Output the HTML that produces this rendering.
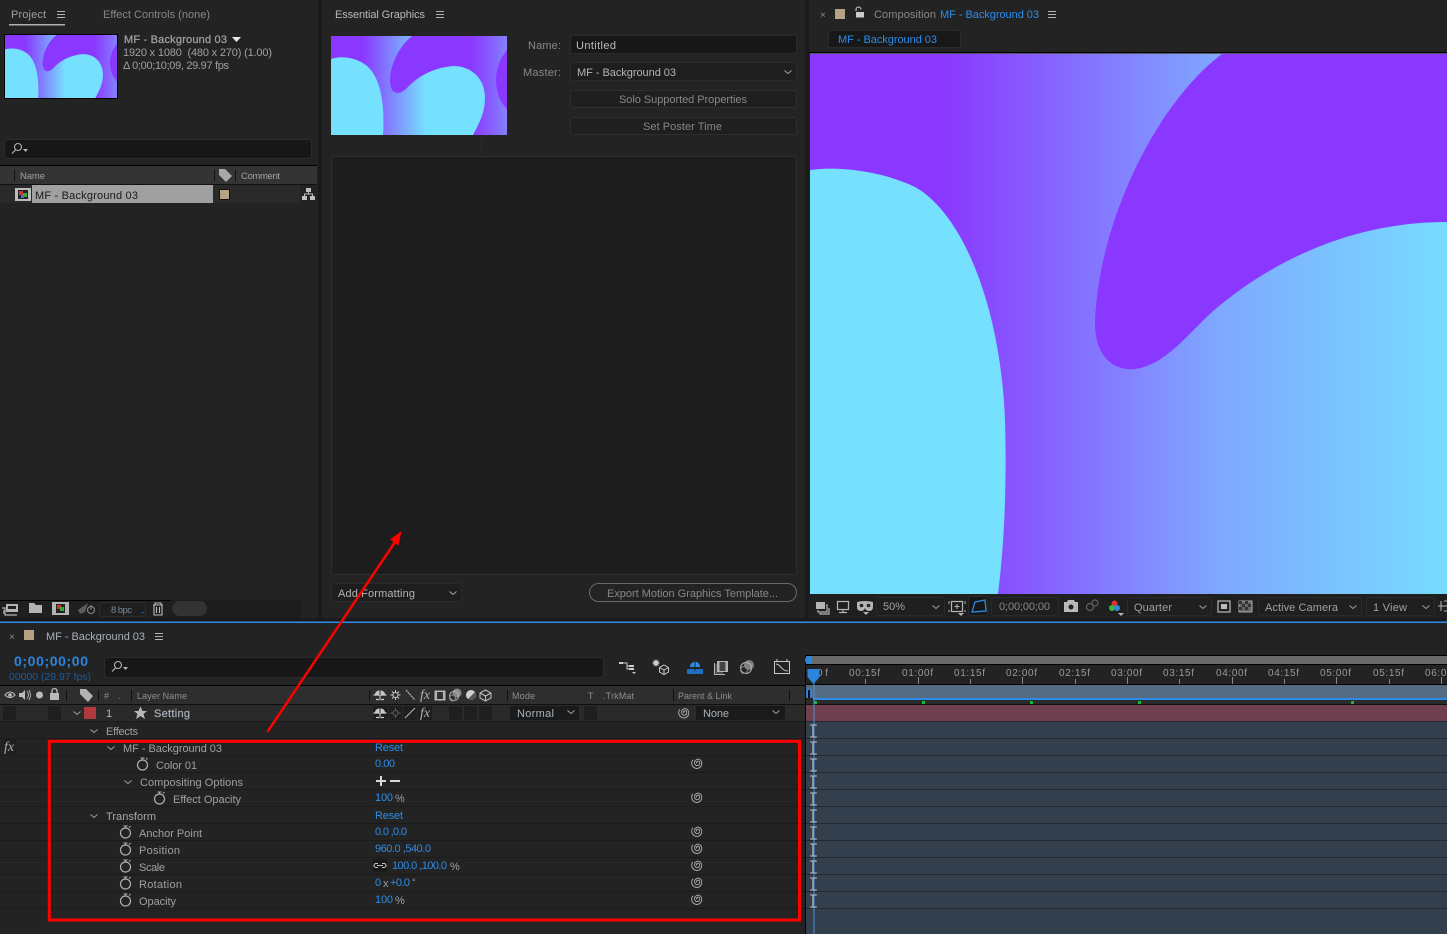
<!DOCTYPE html>
<html><head><meta charset="utf-8"><title>After Effects</title>
<style>
html,body{margin:0;padding:0;background:#1a1a1a;width:1447px;height:934px;overflow:hidden}
svg{display:block}
text{font-family:"Liberation Sans",sans-serif;font-size:11px;fill:#a0a0a0;white-space:pre}
.b{fill:#2d8ceb}.h{font-size:9.5px;fill:#8e8e8e}.d{fill:#878787}.l{fill:#c4c4c4}
.r{font-size:10px;fill:#9a9a9a}
.ic{fill:none;stroke:#b4b4b4;stroke-width:1.2}
.if{fill:#b4b4b4}
</style></head><body>
<svg width="1447" height="934" viewBox="0 0 1447 934" xmlns="http://www.w3.org/2000/svg">
<defs>
<linearGradient id="v" gradientUnits="userSpaceOnUse" x1="810" x2="1447" y1="0" y2="0">
<stop offset="0" stop-color="#8a38ff"/><stop offset=".21" stop-color="#8a38ff"/><stop offset=".64" stop-color="#7fa8ff"/><stop offset="1" stop-color="#76dcff"/></linearGradient>
<linearGradient id="t"><stop offset="0" stop-color="#8a38ff"/><stop offset=".18" stop-color="#8a38ff"/><stop offset=".54" stop-color="#75e1ff"/><stop offset="1" stop-color="#75e1ff"/></linearGradient>
<linearGradient id="t2" gradientUnits="userSpaceOnUse" x1="0" x2="176" y1="0" y2="0"><stop offset="0" stop-color="#8a38ff"/><stop offset=".8" stop-color="#8a38ff"/><stop offset="1" stop-color="#8580ff"/></linearGradient>
<g id="thumb">
<rect width="176" height="99" fill="url(#t)"/>
<path d="M81 0C68 10 59 30 59 44C59 58 67 60 75 53C85 42 100 32 122 30C142 30 154 44 154 62C154 76 148 88 142 99L176 99L176 0Z" fill="url(#t2)"/>
<path d="M176 14C168 24 165 34 165 44C165 56 169 66 176 73Z" fill="#8a38ff"/>
<path d="M0 23C8 20 24 20 36 30C50 42 54 70 52 99L0 99Z" fill="#75e1ff"/>
</g>
<g id="sw"><circle cx="0" cy="1" r="5" fill="none" stroke="#b0b0b0" stroke-width="1.2"/><path d="M-2 -6H2M0 -6V-4M3.5 -4.5L5 -6" stroke="#b0b0b0" stroke-width="1.1" fill="none"/></g>
<g id="sp"><path d="M0 .5A1.5 1.5 0 0 1 3 .5A2.500 2.500 0 0 1 -2 .5A3.500 3.500 0 0 1 5 .5A5 5 0 0 1 -5 .5A5.500 5.500 0 0 1 -1.500 -4.500" fill="none" stroke="#a8a8a8" stroke-width="1" transform="rotate(-30)"/></g>
<g id="ib"><path d="M-3.3 -6H3.3M-.6 -6V6M-3.3 6H3.3" fill="none" stroke="#a9b2ba" stroke-width="1.2"/></g>
<g id="chev"><path d="M-3.5 -1.5L0 1.5L3.5 -1.5" fill="none" stroke="#a0a0a0" stroke-width="1"/></g>
<g id="menu"><path d="M0 .5H8M0 3.5H8M0 6.5H8" stroke="#b4b4b4" stroke-width="1" fill="none"/></g>
<g id="mp"><path d="M-5 -.5C-5 -6 5 -6 5 -.5Z" fill="#c8c8c8"/><path d="M-6.500 0H6.500M-4 4.500H4" fill="none" stroke="#d0d0d0" stroke-width="1.200"/><path d="M0 -5V5" stroke="#2a2a2a" stroke-width="1"/><path d="M0 0V4" stroke="#d0d0d0" stroke-width="1"/></g>
</defs>

<rect width="1447" height="934" fill="#1a1a1a"/>
<!-- panels -->
<rect x="0" y="0" width="318" height="618" fill="#232323"/>
<rect x="322" y="0" width="483" height="618" fill="#232323"/>
<rect x="809" y="0" width="638" height="618" fill="#232323"/>
<rect x="0" y="622" width="1447" height="312" fill="#232323"/>
<rect x="0" y="621.500" width="1447" height="1.500" fill="#2d8ceb"/>

<!-- PROJECT -->
<text x="11" y="18" textLength="35">Project</text>
<use href="#menu" x="57" y="11"/>
<rect x="9" y="24" width="56" height="1.500" fill="#b0b0b0"/>
<text x="103" y="18" textLength="107" class="d">Effect Controls (none)</text>
<rect x="4" y="34" width="114" height="65" fill="#000"/>
<svg x="5" y="35" width="112" height="63" viewBox="0 0 176 99" preserveAspectRatio="none"><use href="#thumb"/></svg>
<text x="124" y="43" textLength="103" style="stroke:#a3a3a3;stroke-width:.25">MF - Background 03</text>
<path d="M232 37H241L236.500 42Z" fill="#e8e8e8"/>
<text x="123" y="56" textLength="149">1920 x 1080  (480 x 270) (1.00)</text>
<text x="123" y="69" textLength="106">Δ 0;00;10;09, 29.97 fps</text>
<rect x="4.500" y="139.500" width="307" height="19" rx="3" fill="#171717" stroke="#2c2c2c"/>
<circle cx="18" cy="147" r="3.500" fill="none" stroke="#b4b4b4" stroke-width="1.100"/><path d="M15.500 150L12 153.500" stroke="#b4b4b4" stroke-width="1.200"/><path d="M23 149H28L25.500 152Z" fill="#b4b4b4"/>
<rect x="0" y="165" width="317" height="1" fill="#000"/>
<rect x="0" y="166" width="317" height="18" fill="#343434"/>
<rect x="0" y="184" width="317" height="1" fill="#111"/>
<rect x="14" y="170" width="1" height="11" fill="#111"/><rect x="214" y="170" width="1" height="11" fill="#111"/><rect x="235" y="170" width="1" height="11" fill="#111"/>
<text x="20" y="179" textLength="25" class="h" style="fill:#a0a0a0">Name</text>
<path d="M219 169H225L232 176L226 182L219 175Z" fill="#a8a8a8"/>
<text x="241" y="179" textLength="39" class="h" style="fill:#a0a0a0">Comment</text>
<rect x="0" y="185" width="300" height="18" fill="#2a2a2a"/>
<rect x="32" y="185" width="181" height="18" fill="#a0a0a0"/>
<rect x="15" y="188" width="16" height="13" fill="#bbb"/><rect x="18" y="190" width="10" height="9" fill="#222"/><rect x="19" y="191" width="4" height="4" fill="#c33"/><rect x="23" y="193" width="4" height="4" fill="#3a3"/><rect x="21" y="195" width="3" height="3" fill="#47c"/>
<text x="35" y="199" textLength="103" style="fill:#1a1a1a">MF - Background 03</text>
<rect x="219.500" y="189.500" width="10" height="10" fill="#b5a283" stroke="#111"/>
<path d="M306 188H311V192H306ZM302 196H307V200H302ZM310 196H315V200H310Z" fill="#c0c0c0"/><path d="M308.500 192V194M304.500 196V194H312.500V196" fill="none" stroke="#c0c0c0"/>
<!-- project footer -->
<rect x="0" y="600" width="171" height="1" fill="#000"/>
<rect x="0" y="601" width="301" height="17" fill="#1f1f1f"/><rect x="171" y="600" width="130" height="18" fill="#1d1d1d"/>
<g class="ic"><rect x="6" y="604" width="12" height="8" fill="#b4b4b4" stroke="none"/><rect x="8" y="606" width="8" height="3" fill="#222" stroke="none"/><path d="M2 608H5V615H17" /><path d="M3 611H5M3 613H5"/></g>
<path d="M29 603H34L36 605H42V613H29Z" fill="#b4b4b4"/>
<rect x="52" y="602" width="17" height="13" fill="#b4b4b4"/><rect x="56" y="604" width="9" height="9" fill="#222"/><rect x="57" y="605" width="4" height="4" fill="#c33"/><rect x="60" y="607" width="4" height="4" fill="#3a3"/>
<path d="M78 610L88 603L85 612L80 614Z" fill="#5c5c5c"/><circle cx="91" cy="610" r="3.500" fill="none" stroke="#8a8a8a" stroke-width="1.100"/><path d="M91 605V610" stroke="#8a8a8a"/>
<rect x="99.500" y="602.500" width="46" height="14" rx="2" fill="#1f1f1f" stroke="#2c2c2c"/>
<text x="111" y="613" textLength="21" class="h" style="fill:#7d8894">8 bpc</text>
<rect x="142" y="612" width="1.200" height="1.200" fill="#2d8ceb"/>
<path d="M153 605H163M155 605V603H161V605M154 605V615H162V605M156.500 607V613M159.500 607V613" fill="none" stroke="#bbb" stroke-width="1.100"/>
<rect x="172" y="601" width="35" height="15" rx="7.500" fill="#333"/>

<!-- ESSENTIAL -->
<text x="335" y="18" textLength="90" style="fill:#b8b8b8">Essential Graphics</text>
<use href="#menu" x="436" y="11"/>
<svg x="331" y="36" width="176" height="99" viewBox="0 0 176 99"><use href="#thumb"/></svg>
<text x="528" y="49" textLength="33" class="d">Name:</text>
<text x="523" y="76" textLength="38" class="d">Master:</text>
<rect x="570.500" y="35.500" width="226" height="18" rx="2" fill="#171717" stroke="#2b2b2b"/>
<text x="576" y="49" textLength="40" style="fill:#bdbdbd">Untitled</text>
<rect x="570.500" y="62.500" width="226" height="18" rx="2" fill="#1e1e1e" stroke="#2b2b2b"/>
<text x="577" y="76" textLength="99" style="fill:#b4b4b4">MF - Background 03</text>
<use href="#chev" x="788" y="72"/>
<rect x="570.500" y="90.500" width="226" height="17" rx="2" fill="#1f1f1f" stroke="#2e2e2e"/>
<text x="619" y="103" textLength="128" class="d">Solo Supported Properties</text>
<rect x="570.500" y="117.500" width="226" height="17" rx="2" fill="#1f1f1f" stroke="#2e2e2e"/>
<text x="643" y="130" textLength="79" class="d">Set Poster Time</text>
<rect x="481" y="139" width="1" height="14" fill="#2c2c2c"/>
<rect x="331.500" y="156.500" width="465" height="418" rx="2" fill="#1d1d1d" stroke="#2e2e2e"/>
<rect x="331.500" y="583.500" width="130" height="18" rx="2" fill="#1e1e1e" stroke="#2b2b2b"/>
<text x="338" y="597" textLength="77" style="fill:#b4b4b4">Add Formatting</text>
<use href="#chev" x="453" y="593"/>
<rect x="589.500" y="583.500" width="207" height="18" rx="9" fill="#232323" stroke="#6a6a6a"/>
<text x="607" y="597" textLength="171" class="d">Export Motion Graphics Template...</text>

<!-- COMP -->
<text x="820" y="18" class="d" style="font-size:10px">×</text>
<rect x="835" y="9" width="10" height="10" fill="#b5a283"/>
<path d="M856 11V9.500A2.500 2.500 0 0 1 861 9.500" fill="none" stroke="#ccc" stroke-width="1.100"/><rect x="856" y="12" width="8" height="5.500" fill="#ccc"/>
<text x="874" y="18" textLength="62" class="d">Composition</text>
<text x="940" y="18" textLength="99" class="b">MF - Background 03</text>
<use href="#menu" x="1048" y="11"/>
<rect x="828.500" y="30.500" width="132" height="17" rx="2" fill="#181818" stroke="#2b2b2b"/>
<text x="838" y="43" textLength="99" class="b">MF - Background 03</text>
<rect x="809" y="52" width="638" height="1" fill="#000"/>
<rect x="810" y="53" width="637" height="1" fill="#55556a"/>
<svg x="810" y="54" width="637" height="540" viewBox="810 54 637 540">
<rect x="810" y="54" width="637" height="540" fill="url(#v)"/>
<path d="M1222 54C1160 100 1100 215 1095 320C1094 358 1115 371 1135 369C1165 365 1187 335 1212 312C1270 262 1350 222 1447 222L1447 54Z" fill="#8a38ff"/>
<path d="M810 170C835 166 880 170 915 187C960 212 1000 300 1005 420C1007 490 1004 545 998 594L810 594Z" fill="#75e1ff"/>
</svg>
<!-- viewer bar -->
<rect x="810" y="594" width="637" height="23" fill="#1f1f1f"/>
<g class="ic">
<rect x="816" y="602" width="9" height="7" fill="#b4b4b4" stroke="none"/><path d="M818 610V612H827V605H826M820 613V614H829V608"/>
<rect x="837.500" y="601.500" width="11" height="8"/><path d="M843 610V612M839 612.500H847"/>
</g>
<path d="M857 602Q865 600 873 602V607Q873 611 869 611Q866 611 865 608Q864 611 861 611Q857 611 857 607Z" fill="#b4b4b4"/><circle cx="861.500" cy="605.500" r="1.800" fill="#222"/><circle cx="868.500" cy="605.500" r="1.800" fill="#222"/>
<path d="M866 612H872L869 615Z" fill="#b4b4b4" transform="translate(-3 0)"/>
<rect x="876.500" y="597.500" width="68" height="18" rx="2" fill="#1f1f1f" stroke="#2a2a2a"/>
<text x="883" y="610" textLength="22">50%</text><use href="#chev" x="936" y="607"/>
<g class="ic"><rect x="951.500" y="601.500" width="11" height="10"/><path d="M957 604V609M954.500 606.500H959.500M949 604V601M949 610V612M965 604V601M965 610V612" stroke-width="1"/></g>
<path d="M958 613H964L961 616Z" fill="#b4b4b4"/>
<rect x="968.500" y="596.500" width="19" height="19" rx="2" fill="#171717" stroke="#2b2b2b"/>
<path d="M972 612L975 602L985 600L986 611Z" fill="none" stroke="#2d8ceb" stroke-width="1.300"/>
<rect x="991.500" y="597.500" width="67" height="18" rx="2" fill="#1f1f1f" stroke="#2a2a2a"/>
<text x="999" y="610" textLength="51" class="d">0;00;00;00</text>
<path d="M1064 602H1067L1068 600H1074L1075 602H1078V612H1064Z" fill="#b9b9b9"/><circle cx="1071" cy="607" r="2.500" fill="#222"/>
<g opacity=".45"><circle cx="1090" cy="607" r="3.500" class="ic"/><circle cx="1095" cy="603" r="3" class="ic"/></g>
<circle cx="1114.500" cy="603.500" r="3" fill="#d33"/><circle cx="1112" cy="608" r="3" fill="#3b3"/><circle cx="1117" cy="608" r="3" fill="#38d"/>
<path d="M1118 613H1124L1121 616Z" fill="#b4b4b4"/>
<rect x="1127.500" y="597.500" width="84" height="18" rx="2" fill="#1f1f1f" stroke="#2a2a2a"/>
<text x="1134" y="611" textLength="38">Quarter</text><use href="#chev" x="1203" y="607"/>
<rect x="1218" y="601" width="12" height="11" fill="none" stroke="#bbb" stroke-width="1.200"/><rect x="1221" y="604" width="6" height="5" fill="#bbb"/>
<rect x="1239" y="601" width="13" height="11" fill="#666" stroke="#aaa"/><path d="M1239 601h3v3h-3zM1245 601h3v3h-3zM1242 604h3v3h-3zM1248 604h3v3h-3zM1239 607h3v3h-3zM1245 607h3v3h-3z" fill="#333"/>
<rect x="1258.500" y="597.500" width="103" height="18" rx="2" fill="#1f1f1f" stroke="#2a2a2a"/>
<text x="1265" y="611" textLength="73">Active Camera</text><use href="#chev" x="1353" y="607"/>
<rect x="1366.500" y="597.500" width="68" height="18" rx="2" fill="#1f1f1f" stroke="#2a2a2a"/>
<text x="1373" y="611" textLength="34">1 View</text><use href="#chev" x="1426" y="607"/>
<path d="M1438 606H1447M1441 601V611M1444 601H1447M1444 611H1447" fill="none" stroke="#b4b4b4"/>

<!-- TIMELINE LEFT -->
<text x="9" y="640" class="d" style="font-size:10px">×</text>
<rect x="24" y="630" width="10" height="10" fill="#b5a283"/>
<text x="46" y="640" textLength="99" style="fill:#a8b0b8">MF - Background 03</text>
<use href="#menu" x="155" y="633"/>
<text x="14" y="666" textLength="74" style="font-size:14px;font-weight:bold;fill:#2d84dc">0;00;00;00</text>
<text x="9" y="680" textLength="82" style="font-size:10.500px;fill:#1d5a9c">00000 (29.97 fps)</text>
<rect x="104.500" y="657.500" width="499" height="20" rx="3" fill="#171717" stroke="#2c2c2c"/>
<circle cx="118" cy="665" r="3.500" fill="none" stroke="#b4b4b4" stroke-width="1.100"/><path d="M115.500 668L112 671.500" stroke="#b4b4b4" stroke-width="1.200"/><path d="M123 667H128L125.500 670Z" fill="#b4b4b4"/>
<!-- timeline tool icons -->
<path d="M622 663H627V669H631M627 666H631" fill="none" stroke="#ccc"/><path d="M619 662h4v2h-4zM629 665h5v2h-5zM629 668h5v2h-5zM632 672h4l-2 2z" fill="#ccc"/>
<path d="M661 666L665.500 668.500V673L661 675.500L656.500 673V668.500ZM656.500 668.500L661 671L665.500 668.500M661 671V675.500" transform="translate(3 -1)" fill="none" stroke="#c8c8c8"/><path d="M656 659l1 2 2-1-1 2 2 1-2 1 1 2-2-1-1 2-1-2-2 1 1-2-2-1 2-1-1-2 2 1z" fill="#d0d0d0"/>
<path d="M687 669H703V674H687Z" fill="#1d6fc4"/><path d="M690 667C690 660 700 660 700 667Z" fill="#2d8ceb"/><path d="M695 662V671M689 668H701" stroke="#232323"/>
<rect x="717" y="661" width="11" height="11" fill="#b4b4b4"/><rect x="719.500" y="662" width="6" height="9" fill="#444"/><path d="M714.500 663V674.500H725" fill="none" stroke="#b4b4b4"/><path d="M716 664V673H723" fill="none" stroke="#777"/>
<circle cx="749" cy="665" r="5" fill="#808080"/><circle cx="746" cy="668" r="5.500" fill="none" stroke="#b4b4b4"/><circle cx="744" cy="670" r="3.500" fill="none" stroke="#888"/>
<rect x="774.500" y="661.500" width="15" height="12" fill="none" stroke="#c8c8c8"/><path d="M776 664C781 664 781 671 788 671" fill="none" stroke="#c8c8c8"/><path d="M777 659V662M787 659V662" stroke="#c8c8c8"/>
<!-- header row -->
<rect x="0" y="685" width="805" height="1" fill="#000"/>
<rect x="0" y="686" width="805" height="18" fill="#2e2e2e"/>
<rect x="0" y="704" width="805" height="1" fill="#0f0f0f"/>
<path d="M5 695Q10 689 15 695Q10 700 5 695Z" fill="none" stroke="#bbb"/><circle cx="10" cy="695" r="1.800" fill="#bbb"/>
<path d="M19 693H22L25 690V700L22 697H19Z" fill="#bbb"/><path d="M27 691Q30 695 27 699M29 690Q32 695 29 700" fill="none" stroke="#aaa"/>
<circle cx="39.500" cy="695" r="3.500" fill="#bbb"/>
<rect x="50" y="693" width="9" height="7" fill="#bbb"/><path d="M52 693V691A2.500 2.500 0 0 1 57 691V693" fill="none" stroke="#bbb" stroke-width="1.300"/>
<rect x="66" y="690" width="1" height="11" fill="#111"/><rect x="98" y="690" width="1" height="11" fill="#111"/><rect x="131" y="690" width="1" height="11" fill="#111"/><rect x="369" y="690" width="1" height="11" fill="#111"/>
<path d="M80 689H86L93 696L88 702L80 694Z" fill="#b4b4b4"/>
<text x="104" y="699" class="h" style="font-size:9px">#</text><text x="118" y="699" class="h" style="font-size:9px">.</text>
<text x="137" y="699" textLength="50" class="h" style="font-size:9px">Layer Name</text>
<use href="#mp" x="380" y="695"/>
<g stroke="#c8c8c8" fill="none"><circle cx="395.500" cy="695" r="2.500"/><path d="M395.500 690V692M395.500 698V700M390.500 695H392.500M398.500 695H400.500M392 691.500L393.500 693M397.500 697L399 698.500M399 691.500L397.500 693M392 698.500L393.500 697"/></g>
<path d="M406 690L415 700" stroke="#c8c8c8" stroke-dasharray="2 .6"/>
<text x="420" y="699" style="font-family:'Liberation Serif',serif;font-style:italic;font-size:14px;fill:#b0b0b0">fx</text>
<rect x="434.500" y="690.500" width="11" height="10" fill="#b4b4b4"/><rect x="437" y="692" width="6" height="7" fill="#333"/>
<circle cx="457" cy="693" r="4.500" fill="#8a8a8a"/><circle cx="454" cy="696" r="4.500" fill="none" stroke="#b4b4b4"/><circle cx="452.500" cy="698" r="3" fill="none" stroke="#888"/>
<circle cx="471" cy="695" r="5" fill="#d0d0d0"/><path d="M475 692A5 5 0 0 1 468 699Z" fill="#555"/>
<path d="M485.500 690L491 693V698L485.500 701L480 698V693ZM480 693L485.500 696L491 693M485.500 696V701" fill="none" stroke="#c0c0c0"/>
<rect x="507" y="690" width="1" height="11" fill="#111"/><rect x="673" y="690" width="1" height="11" fill="#111"/><rect x="789" y="690" width="1" height="11" fill="#111"/>
<text x="512" y="699" textLength="23" class="h" style="font-size:9px">Mode</text>
<text x="588" y="699" class="h" style="font-size:9px">T</text>
<text x="603" y="699" textLength="31" class="h" style="font-size:9px">.TrkMat</text>
<text x="678" y="699" textLength="54" class="h" style="font-size:9px">Parent &amp; Link</text>

<!-- layer row -->
<rect x="0" y="705" width="805" height="16" fill="#2a2a2a"/>
<rect x="3" y="706" width="13" height="14" fill="#1f1f1f"/><rect x="48" y="706" width="13" height="14" fill="#1f1f1f"/>
<use href="#chev" x="77" y="713"/>
<rect x="84" y="707" width="12" height="12" fill="#b03a3e"/>
<text x="106" y="717" style="fill:#b0b8c0">1</text>
<path d="M140.500 706.500L142.500 711H147L143.500 714L145 719L140.500 716L136 719L137.500 714L134 711H138.500Z" fill="#b8b8b8"/>
<text x="154" y="717" textLength="36" style="fill:#a8b2bc;stroke:#a8b2bc;stroke-width:.2">Setting</text>
<rect x="373" y="706" width="15" height="14" fill="#1f1f1f"/><use href="#mp" x="380" y="713"/>
<rect x="389" y="706" width="13" height="14" fill="#1f1f1f"/>
<g stroke="#5f5f5f" fill="none"><circle cx="395.500" cy="713" r="2.500"/><path d="M395.500 708V710M395.500 716V718M390.500 713H392.500M398.500 713H400.500"/></g>
<rect x="403" y="706" width="14" height="14" fill="#1f1f1f"/><path d="M405 718L415 708" stroke="#b4b4b4" stroke-width="1.100"/>
<rect x="418" y="706" width="14" height="14" fill="#1f1f1f"/>
<text x="420" y="717" style="font-family:'Liberation Serif',serif;font-style:italic;font-size:14px;fill:#b0b0b0">fx</text>
<rect x="449" y="706" width="13" height="14" fill="#1f1f1f"/><rect x="464" y="706" width="13" height="14" fill="#1f1f1f"/><rect x="479" y="706" width="13" height="14" fill="#1f1f1f"/>
<rect x="510" y="706" width="69" height="14" fill="#1a1a1a"/>
<text x="517" y="717" textLength="37" style="fill:#a8b2bc">Normal</text><use href="#chev" x="571" y="712"/>
<rect x="584" y="706" width="13" height="14" fill="#1f1f1f"/>
<use href="#sp" x="683.500" y="712.500"/>
<rect x="696" y="706" width="89" height="14" fill="#1a1a1a"/>
<text x="703" y="717" textLength="26" style="fill:#a8b2bc">None</text><use href="#chev" x="776" y="712"/>

<!-- property rows -->
<g fill="#1b1b1b">
<rect y="721" width="805" height="1"/><rect y="738" width="805" height="1"/><rect y="755" width="805" height="1"/><rect y="772" width="805" height="1"/><rect y="789" width="805" height="1"/><rect y="806" width="805" height="1"/><rect y="823" width="805" height="1"/><rect y="840" width="805" height="1"/><rect y="857" width="805" height="1"/><rect y="874" width="805" height="1"/><rect y="891" width="805" height="1"/><rect y="908" width="805" height="1"/>
</g>
<rect x="3" y="739" width="13" height="15" fill="#1f1f1f"/>
<text x="4" y="751" style="font-family:'Liberation Serif',serif;font-style:italic;font-size:14px;fill:#b0b0b0">fx</text>

<use href="#chev" x="94" y="731"/><text x="106" y="735" textLength="32">Effects</text>
<use href="#chev" x="111" y="748"/><text x="123" y="752" textLength="99">MF - Background 03</text>
<use href="#sw" x="142.500" y="764"/><text x="156" y="769" textLength="41">Color 01</text>
<use href="#chev" x="128" y="782"/><text x="140" y="786" textLength="103">Compositing Options</text>
<use href="#sw" x="159.500" y="798"/><text x="173" y="803" textLength="68">Effect Opacity</text>
<use href="#chev" x="94" y="816"/><text x="106" y="820" textLength="50" style="fill:#a0a8b0">Transform</text>
<use href="#sw" x="125.500" y="832"/><text x="139" y="837" textLength="63">Anchor Point</text>
<use href="#sw" x="125.500" y="849"/><text x="139" y="854" textLength="41">Position</text>
<use href="#sw" x="125.500" y="866"/><text x="139" y="871" textLength="26">Scale</text>
<use href="#sw" x="125.500" y="883"/><text x="139" y="888" textLength="43">Rotation</text>
<use href="#sw" x="125.500" y="900"/><text x="139" y="905" textLength="37">Opacity</text>

<text x="375" y="751" textLength="28" class="b">Reset</text>
<text x="375" y="767" textLength="20" class="b">0.00</text>
<path d="M376 781H386M381 776V786" stroke="#d8d8d8" stroke-width="2"/><path d="M390 781H400" stroke="#d8d8d8" stroke-width="2"/>
<text x="375" y="801" textLength="18" class="b">100</text><text x="395" y="802" textLength="9">%</text>
<text x="375" y="819" textLength="28" class="b">Reset</text>
<text x="375" y="835" textLength="32" class="b">0.0 ,0.0</text>
<text x="375" y="852" textLength="56" class="b">960.0 ,540.0</text>
<rect x="373" y="859" width="14" height="13" fill="#1a1a1a"/>
<path d="M378 863.500H376A2 2 0 0 0 376 867.500H378M382 863.500H384A2 2 0 0 1 384 867.500H382M377 865.500H383" fill="none" stroke="#c0c0c0" stroke-width="1.100"/>
<text x="392" y="869" textLength="55" class="b">100.0 ,100.0</text><text x="450" y="870" textLength="9">%</text>
<text x="375" y="886" textLength="6" class="b">0</text><text x="383" y="887" textLength="7">x</text><text x="390" y="886" textLength="20" class="b">+0.0</text><text x="412" y="885" style="font-size:9px">°</text>
<text x="375" y="903" textLength="18" class="b">100</text><text x="395" y="904" textLength="9">%</text>
<use href="#sp" x="696.500" y="763"/><use href="#sp" x="696.500" y="797"/><use href="#sp" x="696.500" y="831"/><use href="#sp" x="696.500" y="848"/><use href="#sp" x="696.500" y="865"/><use href="#sp" x="696.500" y="882"/><use href="#sp" x="696.500" y="899"/>

<!-- TIMELINE RIGHT -->
<rect x="805" y="655" width="1.200" height="279" fill="#050505"/>
<rect x="806" y="655" width="641" height="1" fill="#000"/>
<rect x="806" y="656" width="641" height="8" fill="#6a6a6a"/>
<rect x="806" y="664" width="641" height="1" fill="#000"/>
<path d="M812 656V664H809A4 4 0 0 1 809 656Z" fill="#2d84dc"/>
<rect x="806" y="665" width="641" height="19" fill="#232323"/>
<rect x="806" y="684" width="641" height="1" fill="#000"/>
<text x="817" y="676" textLength="11" class="r">0f</text>
<text x="849" y="676" textLength="31" class="r">00:15f</text><text x="902" y="676" textLength="31" class="r">01:00f</text><text x="954" y="676" textLength="31" class="r">01:15f</text><text x="1006" y="676" textLength="31" class="r">02:00f</text><text x="1059" y="676" textLength="31" class="r">02:15f</text><text x="1111" y="676" textLength="31" class="r">03:00f</text><text x="1163" y="676" textLength="31" class="r">03:15f</text><text x="1216" y="676" textLength="31" class="r">04:00f</text><text x="1268" y="676" textLength="31" class="r">04:15f</text><text x="1320" y="676" textLength="31" class="r">05:00f</text><text x="1373" y="676" textLength="31" class="r">05:15f</text><text x="1425" y="676" textLength="31" class="r">06:00f</text>
<g fill="#8a8a8a">
<rect x="865" y="679" width="1" height="5"/><rect x="918" y="677" width="1" height="7"/><rect x="970" y="679" width="1" height="5"/><rect x="1022" y="677" width="1" height="7"/><rect x="1075" y="679" width="1" height="5"/><rect x="1127" y="677" width="1" height="7"/><rect x="1179" y="679" width="1" height="5"/><rect x="1232" y="677" width="1" height="7"/><rect x="1284" y="679" width="1" height="5"/><rect x="1336" y="677" width="1" height="7"/><rect x="1389" y="679" width="1" height="5"/><rect x="1441" y="677" width="1" height="7"/>
</g>
<rect x="806" y="685" width="641" height="13" fill="#556b82"/>
<rect x="813" y="698" width="634" height="2" fill="#2d8ceb"/>
<rect x="806" y="700" width="641" height="4" fill="#2a2a2a"/>
<rect x="806" y="704" width="641" height="1" fill="#111"/>
<rect x="806" y="689" width="6" height="9" rx="2" fill="#2d84dc"/><rect x="808" y="690" width="2" height="8" fill="#111"/>
<g fill="#1fb83a"><rect x="814" y="701" width="3" height="3"/><rect x="922" y="701" width="3" height="3"/><rect x="1030" y="701" width="3" height="3"/><rect x="1138" y="701" width="3" height="3"/><rect x="1351" y="701" width="3" height="3"/></g>
<rect x="806" y="705" width="641" height="16" fill="#6f404f"/>
<rect x="806" y="721" width="641" height="213" fill="#333f4d"/>
<g fill="#25292f">
<rect x="806" y="721" width="641" height="1"/><rect x="806" y="738" width="641" height="1"/><rect x="806" y="755" width="641" height="1"/><rect x="806" y="772" width="641" height="1"/><rect x="806" y="789" width="641" height="1"/><rect x="806" y="806" width="641" height="1"/><rect x="806" y="823" width="641" height="1"/><rect x="806" y="840" width="641" height="1"/><rect x="806" y="857" width="641" height="1"/><rect x="806" y="874" width="641" height="1"/><rect x="806" y="891" width="641" height="1"/><rect x="806" y="908" width="641" height="1"/>
</g>
<rect x="813.500" y="670" width="1" height="264" fill="#4f8fd6"/>
<use href="#ib" x="813.500" y="731"/><use href="#ib" x="813.500" y="748"/><use href="#ib" x="813.500" y="765"/><use href="#ib" x="813.500" y="782"/><use href="#ib" x="813.500" y="799"/><use href="#ib" x="813.500" y="816"/><use href="#ib" x="813.500" y="833"/><use href="#ib" x="813.500" y="850"/><use href="#ib" x="813.500" y="867"/><use href="#ib" x="813.500" y="884"/><use href="#ib" x="813.500" y="901"/>
<path d="M807.500 669H819.500V677L813.500 684L807.500 677Z" fill="#2d84dc"/>

<!-- red annotations -->
<rect x="49.300" y="741.300" width="750.200" height="178.700" fill="none" stroke="#ff0000" stroke-width="3"/>
<path d="M268 731L395 542" stroke="#ff0000" stroke-width="2.500" fill="none" stroke-linecap="round"/>
<path d="M401.500 531L390 539.500L398.500 545.500Z" fill="#ff0000"/>
</svg>
</body></html>
